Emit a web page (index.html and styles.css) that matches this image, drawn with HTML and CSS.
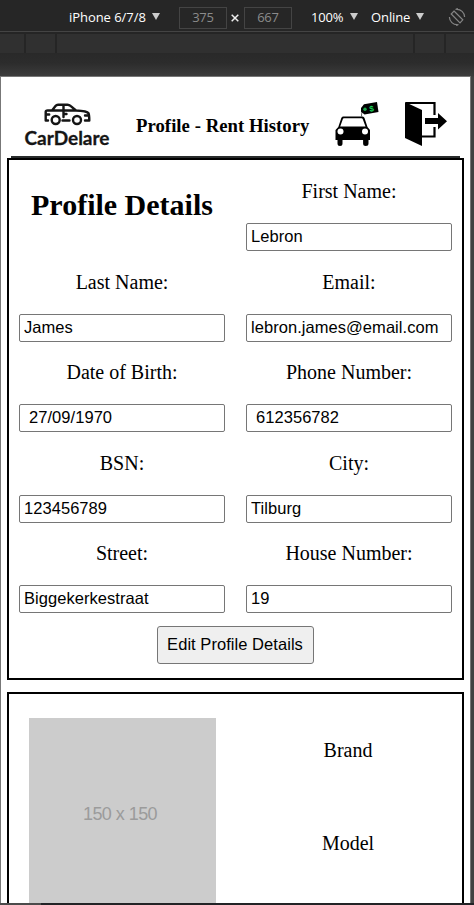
FILE: index.html
```html
<!DOCTYPE html>
<html lang="en">
<head>
<meta charset="utf-8">
<title>Profile - Rent History</title>
<link rel="stylesheet" href="styles.css">
</head>
<body>
<div class="toolbar">
  <span class="device">iPhone 6/7/8</span><i class="caret"></i>
  <span class="dim">375</span>
  <svg class="times" viewBox="0 0 8 8"><path d="M.7.7l6.600 6.600M7.300.7L.7 7.300"/></svg>
  <span class="dim">667</span>
  <span class="zoom">100%</span><i class="caret"></i>
  <span class="online">Online</span><i class="caret"></i>
  <svg class="rotate" viewBox="0 0 18 18"><g fill="none" stroke="#858585" stroke-width="1.2"><path d="M6 3L14.800 11.800 12 14.800 3.200 6zM8.300 1.300A7.800 7.800 0 0 1 16.600 9M9.700 16.700A7.800 7.800 0 0 1 1.400 9"/><path d="M7.500 1.500l2.300-1M10.500 16.500l-2.300 1"/></g></svg>
</div>
<div class="ruler"><i></i><i></i><i></i><i></i><i></i></div>
<div class="stage">
<div class="page">
  <header class="nav">
    <svg class="logo" viewBox="0 0 90 50">
      <g fill="none" stroke="#151515" stroke-width="2.400" stroke-linejoin="round" stroke-linecap="round">
        <path d="M25 18.500h-2.300V9.800q0-1.300 2-1.300h4.300l3.500-4.500q1-1.300 2.500-1.300h9.500q1.700 0 3 1.200L53 8.500q11 .5 12.500 2.700.8 2 .8 7.300H62M29 8.500h24M40.500 3v12M40.500 12h3M39.500 18.500h7M22.700 12.500h3.500M62 13.500h4"/>
        <circle cx="32.700" cy="18" r="4"/><circle cx="54" cy="18" r="4"/>
      </g>
      <text x="1.500" y="42.500" textLength="85" lengthAdjust="spacingAndGlyphs">CarDelare</text>
    </svg>
    <h3>Profile - Rent History</h3>
    <svg class="rent" viewBox="0 0 46 46">
      <path d="M9 14.500h19.500q1.500 0 2 1.500l3 9 2.500 3v10h-1.500v3.500q0 2.500-2.700 2.500t-2.700-2.500V38H8.500v3.500Q8.500 44 6 44t-2.500-2.500V38H1.500V28L4.300 25l3-9q.5-1.500 1.700-1.500z"/>
      <path fill="#fff" d="M10 16.300h17.500q1 0 1.300 1l2.700 7.200H6.200L8.800 17.300q.3-1 1.200-1z"/>
      <circle cx="6.500" cy="29.500" r="3" fill="#fff"/><circle cx="31" cy="29.500" r="3" fill="#fff"/>
      <path d="M27.500 14.500c-.2-4 1-6.500 3.500-8" fill="none" stroke="#333" stroke-width=".8"/>
      <path d="M27 6l3-3.700L43 0l1.500 10-14 2.400-3.500-2.700z"/><circle cx="31" cy="7.200" r="1.700" fill="#19a84a"/>
      <text x="35.300" y="9.300" transform="rotate(-8 38 6)">$</text>
    </svg>
    <svg class="exit" viewBox="0 0 42 44">
      <path d="M0 0l17 8v36L0 36z"/><path d="M1 1h28.500v12M17 34.500h12.500V25" fill="none" stroke="#000" stroke-width="2.200"/>
      <path d="M20 16h13v-5l9 8.200-9 8.300V22H20z"/>
    </svg>
  </header>
  <section class="card profile">
    <h1>Profile Details</h1>
    <label>First Name:<input value="Lebron"></label>
    <label>Last Name:<input value="James"></label>
    <label>Email:<input value="lebron.james@email.com"></label>
    <label>Date of Birth:<input class="inset" value="27/09/1970"></label>
    <label>Phone Number:<input class="inset" value="612356782"></label>
    <label>BSN:<input value="123456789"></label>
    <label>City:<input value="Tilburg"></label>
    <label>Street:<input value="Biggekerkestraat"></label>
    <label>House Number:<input value="19"></label>
    <button type="button">Edit Profile Details</button>
  </section>
  <section class="card rental">
    <div class="thumb">150 x 150</div>
    <div class="facts"><p>Brand</p><p>Model</p></div>
  </section>
</div>
</div>
<div class="scroll"><i></i></div>
</body>
</html>
```
FILE: styles.css
```css
* { box-sizing: border-box; }
body { margin: 0; width: 474px; height: 905px; overflow: hidden; background: #292929; display: flex; flex-direction: column; font-family: "Liberation Serif", serif; color: #000; }
.toolbar { flex: none; height: 32px; border-bottom: 1px solid #444; background: #262626; display: flex; align-items: center; padding: 5px 0 1px 69px; font: 13px/19px "Open Sans", sans-serif; color: #fff; white-space: nowrap; }
.device { width: 83px; letter-spacing: -.05px; }
.caret { width: 8px; height: 7px; background: #ccc; clip-path: polygon(0 0, 100% 0, 50% 100%); margin-top: -2px; }
.dim { width: 48px; height: 22px; border: 1px solid #444; color: #8b8b8b; text-align: center; letter-spacing: -.2px; }
.caret + .dim { margin-left: 19px; }
.times { width: 8px; height: 8px; margin: 0 5px 0 4px; fill: none; stroke: #eee; stroke-width: 1.5; }
.dim + .zoom { margin-left: 19px; }
.zoom { width: 39px; letter-spacing: -.2px; }
.online { margin-left: 13px; width: 45px; letter-spacing: -.1px; }
.rotate { width: 18px; height: 18px; margin-left: 24px; margin-top: -2px; }
.ruler { flex: none; display: grid; grid-template-columns: 24px 29px 356px 29px 28px; column-gap: 2px; height: 21px; padding-top: 2px; background: #252525; }
.ruler i { background: #303030; }
.stage { flex: none; height: 850px; padding-top: 23px; background: linear-gradient(#292929 0, #2c2c2c 10px, #3c3c3c 23px, #424242 24px); }
.page { width: 471px; height: 827px; overflow: hidden; background: #fff; border: 1px solid #777; border-bottom: 0; padding: 0 6px; }
.nav { height: 81px; margin: 0 4px; border-bottom: 2px solid #292c2c; display: flex; align-items: flex-start; }
.logo { flex: none; width: 90px; height: 50px; margin: 25px 0 0 12px; overflow: visible; }
.logo text { font: 700 19px Lato, sans-serif; fill: #151515; stroke: #151515; stroke-width: .3px; }
.nav h3 { flex: none; width: 174px; margin: 38px 0 0 23px; font-size: 18.72px; line-height: 22px; white-space: nowrap; letter-spacing: .04px; }
.rent { flex: none; width: 46px; height: 46px; margin: 25px 0 0 24px; }
.rent text { font: bold 8px "Liberation Sans", sans-serif; fill: #19d75a; }
.exit { flex: none; width: 42px; height: 44px; margin: 25px 0 0 25px; }
.card { width: 457px; border: 2px solid #000; }
.profile { height: 522px; padding: 19px 10px 0; display: grid; grid-template-columns: 206px 206px; column-gap: 21px; grid-template-rows: 91px 90px 91px 90px 85px 38px; }
.profile h1 { margin: 7px 0 0; font-size: 30px; line-height: 38px; text-align: center; white-space: nowrap; }
.profile label { display: flex; flex-direction: column; text-align: center; font-size: 20px; line-height: 24px; }
.profile input { width: 206px; height: 28px; margin-top: 20px; padding: 0 4px 2px; border: 1px solid #767676; border-radius: 2px; background: #fff; color: #000; font: 16.500px "Liberation Sans", sans-serif; letter-spacing: .05px; }
.profile .inset { padding-left: 9px; }
.profile button { grid-column: 1 / 3; justify-self: center; width: 157px; height: 38px; margin-right: 1px; padding: 0 0 2px; border: 1px solid #767676; border-radius: 3px; background: #efefef; color: #000; font: 16.500px "Liberation Sans", sans-serif; letter-spacing: .05px; white-space: nowrap; }
.rental { height: 300px; margin-top: 12px; padding: 24px 10px 0 20px; display: flex; }
.thumb { width: 187px; height: 187px; background: #ccc; color: #9b9b9b; font: 18px/192px "Liberation Sans", sans-serif; text-align: center; padding-right: 5px; letter-spacing: -.55px; }
.facts { width: 206px; margin-left: 29px; text-align: center; font-size: 20px; line-height: 24px; }
.facts p { margin: 20px 0 69px; }
.scroll { flex: none; height: 2px; background: #222326; }
.scroll i { display: block; width: 41px; height: 2px; background: #4b4b4b; }
```
